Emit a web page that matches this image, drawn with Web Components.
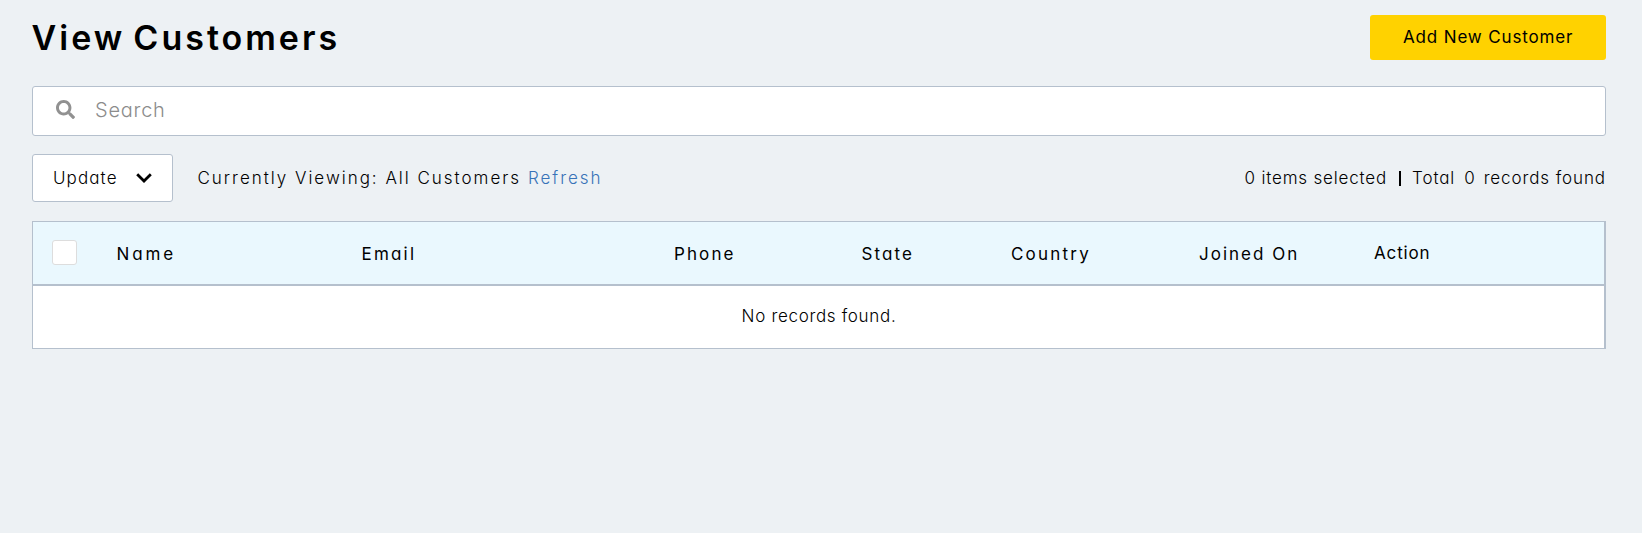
<!DOCTYPE html>
<html lang="en">
<head>
<meta charset="utf-8">
<title>View Customers</title>
<style>
  html { background: #edf1f4; }
  body {
    margin: 0;
    background: #edf1f4;
    color: #000;
    font: 350 17px/24px Inter, "Open Sans", sans-serif;
    font-feature-settings: "cv11";
  }
</style>
</head>
<body>
<customers-page></customers-page>
<script>
const define = (name, html) => {
  const template = document.createElement('template');
  template.innerHTML = html;
  customElements.define(name, class extends HTMLElement {
    constructor() {
      super();
      this.attachShadow({ mode: 'open' }).append(template.content.cloneNode(true));
    }
  });
};

define('page-heading', `
<style>
  :host { display: block; }
  h1 { margin: 0 0 0 -0.500px; font-size: 34px; line-height: 46px; font-weight: 600; letter-spacing: 3px; word-spacing: -3.500px; white-space: nowrap; }
</style>
<h1><slot></slot></h1>`);

define('primary-button', `
<style>
  :host { display: block; width: 236px; height: 45px; }
  button {
    display: flex; align-items: center; justify-content: flex-start;
    width: 100%; height: 100%; padding: 0 0 1px 33px; border: 0; border-radius: 3px;
    background: #ffd200; color: #000; font: inherit; font-weight: 400;
    font-feature-settings: inherit; letter-spacing: .85px; white-space: nowrap;
  }
</style>
<button type="button"><slot></slot></button>`);

define('search-box', `
<style>
  :host {
    display: flex; align-items: center; box-sizing: border-box; height: 50px;
    padding: 0 0 2px 23px; gap: 20px; background: #fff;
    border: 1px solid #b5c0cd; border-radius: 3px;
  }
  svg { display: block; width: 19px; height: 19px; margin-top: -1px; fill: #919191; }
  span { color: #8c8c8c; font-size: 20px; font-weight: 300; letter-spacing: .75px; }
</style>
<svg viewBox="0 0 512 512"><path d="M505 442.700L405.300 343c-4.500-4.500-10.600-7-17-7H372c27.600-35.300 44-79.700 44-128C416 93.100 322.900 0 208 0S0 93.100 0 208s93.100 208 208 208c48.300 0 92.700-16.400 128-44v16.300c0 6.400 2.500 12.500 7 17l99.700 99.700c9.400 9.400 24.600 9.400 33.900 0l28.300-28.300c9.400-9.400 9.400-24.600.1-34zM208 336c-70.700 0-128-57.200-128-128 0-70.700 57.200-128 128-128 70.700 0 128 57.200 128 128 0 70.700-57.200 128-128 128z"/></svg>
<span><slot></slot></span>`);

define('dropdown-button', `
<style>
  :host { display: block; width: 141px; height: 48px; }
  button {
    display: flex; align-items: center; justify-content: space-between; box-sizing: border-box;
    width: 100%; height: 100%; padding: 0 20px; border: 1px solid #b5c0cd; border-radius: 3px;
    background: #fff; color: #000; font: inherit; font-weight: 360;
    font-feature-settings: inherit; letter-spacing: 1.1px;
  }
  svg { display: block; width: 16px; height: 10px; margin-top: -1px; fill: none; stroke: #000; stroke-width: 2.800; }
</style>
<button type="button"><slot></slot><svg viewBox="0 0 16 10"><path d="M1.200 1.300L8 8l6.800-6.700"/></svg></button>`);

define('viewing-label', `
<style>
  :host { display: flex; gap: 7px; letter-spacing: 1.98px; white-space: nowrap; }
  a { color: #3873b8; letter-spacing: 1.95px; text-decoration: none; }
</style>
<span><slot></slot></span><a href="#"><slot name="link"></slot></a>`);

define('record-counts', `
<style>
  :host { display: flex; align-items: center; letter-spacing: .9px; white-space: nowrap; }
  .selected { letter-spacing: .82px; }
  i { width: 2px; height: 15px; margin: 1px 11px 0 12px; background: #000; }
  b { font-weight: inherit; margin: 0 8px 0 9px; }
</style>
<span class="selected"><slot name="selected"></slot></span><i></i>
<span>Total</span><b><slot name="total"></slot></b><span>records found</span>`);

define('check-box', `
<style>
  :host {
    display: block; box-sizing: border-box; width: 25px; height: 25px; margin-bottom: 2px;
    background: #fff; border: 1px solid #ddd; border-radius: 3px;
  }
</style>`);

define('column-title', `
<style>
  :host { display: block; padding-top: 2px; font-weight: 400; letter-spacing: var(--tracking, 2.2px); white-space: nowrap; }
</style>
<slot></slot>`);

define('data-table', `
<style>
  :host { display: block; border: 1px solid #b5c0cd; border-right-width: 2px; background: #fff; }
  .head {
    display: grid; align-items: center; height: 62px;
    grid-template-columns: 64.500px 245px 312.500px 187.500px 149.500px 188px 175px 1fr;
    padding-left: 19px; background: #eaf8fe; border-bottom: 2px solid #b5c0cd;
  }
  .body { display: flex; align-items: center; justify-content: center; height: 62px; letter-spacing: .68px; line-height: 22px; }
  .body span { padding: 0 0 2px 1px; }
</style>
<div class="head"><slot name="head"></slot></div>
<div class="body"><span><slot></slot></span></div>`);

define('customers-page', `
<style>
  :host { display: block; padding: 15px 36px 0 32px; }
  header, .toolbar { display: flex; justify-content: space-between; }
  header { height: 45px; margin-bottom: 26px; }
  .toolbar { align-items: center; height: 48px; margin: 18px 0 19px; }
  .left { display: flex; align-items: center; gap: 24.500px; }
</style>
<header>
  <page-heading>View Customers</page-heading>
  <primary-button>Add New Customer</primary-button>
</header>
<search-box>Search</search-box>
<div class="toolbar">
  <div class="left">
    <dropdown-button>Update</dropdown-button>
    <viewing-label>Currently Viewing: All Customers<span slot="link">Refresh</span></viewing-label>
  </div>
  <record-counts><span slot="selected">0 items selected</span><span slot="total">0</span></record-counts>
</div>
<data-table>
  <check-box slot="head"></check-box>
  <column-title slot="head" style="--tracking:2.9px">Name</column-title>
  <column-title slot="head" style="--tracking:2.2px">Email</column-title>
  <column-title slot="head" style="--tracking:2.1px">Phone</column-title>
  <column-title slot="head" style="--tracking:2.1px">State</column-title>
  <column-title slot="head">Country</column-title>
  <column-title slot="head" style="--tracking:2px">Joined On</column-title>
  <column-title slot="head" style="--tracking:.85px;padding-top:0">Action</column-title>
  No records found.
</data-table>`);
</script>
</body>
</html>
